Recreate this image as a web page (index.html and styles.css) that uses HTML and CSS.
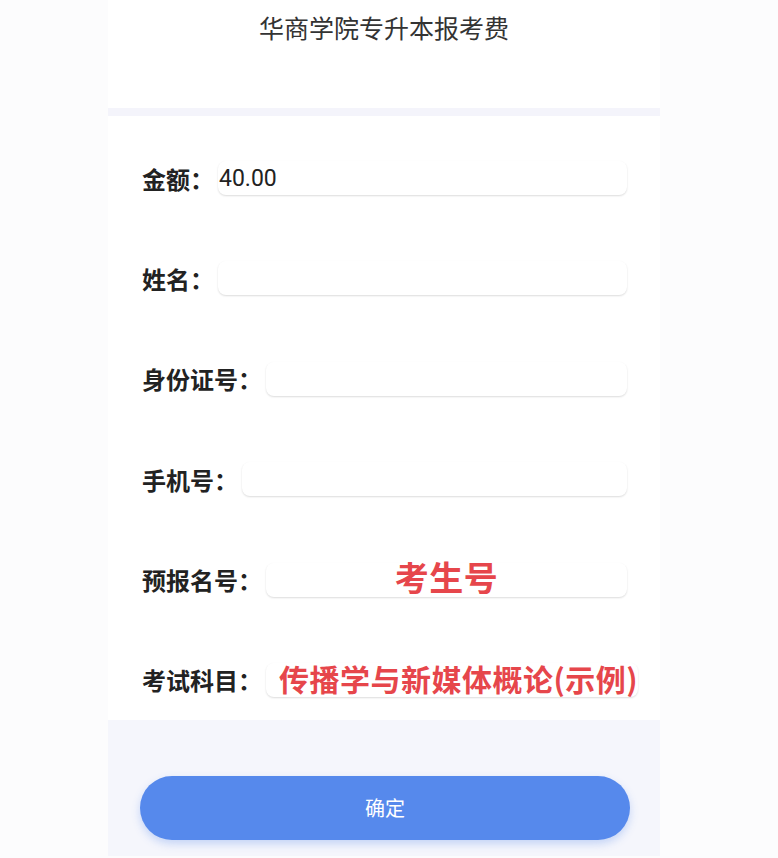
FILE: index.html
```html
<!DOCTYPE html>
<html lang="zh-CN">
<head>
    <meta charset="UTF-8">
    <meta name="viewport" content="width=device-width, initial-scale=1.0">
    <title>华商学院专升本报考费</title>
    <link rel="stylesheet" href="styles.css">
</head>
<body>
    <div class="page">
        <header class="top-bar">
            <h1>华商学院专升本报考费</h1>
        </header>

        <div class="divider"></div>

        <form class="pay-form">
            <div class="form-row">
                <label>金额：</label>
                <div class="field"><span class="value">40.00</span></div>
            </div>
            <div class="form-row">
                <label>姓名：</label>
                <div class="field"></div>
            </div>
            <div class="form-row">
                <label>身份证号：</label>
                <div class="field"></div>
            </div>
            <div class="form-row">
                <label>手机号：</label>
                <div class="field"></div>
            </div>
            <div class="form-row">
                <label>预报名号：</label>
                <div class="field field-center"><span class="note note-big">考生号</span></div>
            </div>
            <div class="form-row">
                <label>考试科目：</label>
                <div class="field"><span class="note">传播学与新媒体概论(示例)</span></div>
            </div>
        </form>

        <div class="actions">
            <button type="button" class="btn-submit">确定</button>
        </div>
    </div>
</body>
</html>
```

FILE: styles.css
```css
html, body {
    margin: 0;
    padding: 0;
}
body {
    background-color: #fcfcfd;
    font-family: Roboto, "Noto Sans CJK SC", sans-serif;
    color: #222;
}
.page {
    width: 552px;
    margin: 0 auto 0 108px;
    background-color: #fff;
    min-height: 856px;
    display: flex;
    flex-direction: column;
}
.top-bar {
    height: 108px;
}
.top-bar h1 {
    margin: 0;
    padding-top: 10px;
    text-align: center;
    font-size: 25px;
    font-weight: normal;
    color: #333;
    line-height: 34px;
    font-family: "Noto Sans CJK SC", sans-serif;
}
.divider {
    height: 8px;
    background-color: #f4f4fb;
}
.pay-form {
    padding: 45px 33px 23px 34px;
    display: flex;
    flex-direction: column;
    gap: 66.4px;
}
.form-row {
    display: flex;
    align-items: center;
    height: 34px;
}
.form-row label {
    font-family: "Noto Sans CJK SC", sans-serif;
    font-weight: bold;
    font-size: 24px;
    color: #222;
    margin-right: 4px;
    white-space: nowrap;
}
.field {
    flex: 1;
    height: 34px;
    border-radius: 8px;
    background-color: #fff;
    box-shadow: 0 1px 2px rgba(0, 0, 0, 0.14);
    display: flex;
    align-items: center;
    white-space: nowrap;
}
.field-center {
    justify-content: center;
}
.value {
    font-size: 23px;
    color: #222;
    padding-left: 1px;
}
.note {
    font-family: "Noto Sans CJK SC", sans-serif;
    font-weight: bold;
    font-size: 30px;
    letter-spacing: 0.5px;
    color: #e6464b;
    padding-left: 13px;
    margin-top: -4px;
}
.note-big {
    font-size: 34px;
    padding-left: 0;
    margin-top: -6px;
}
.actions {
    flex: 1;
    background-color: #f5f6fc;
    padding: 56px 30px 0 32px;
}
.btn-submit {
    display: block;
    width: 100%;
    height: 64px;
    border: none;
    border-radius: 32px;
    background-color: #5689ec;
    color: #fff;
    font-family: "Noto Sans CJK SC", sans-serif;
    font-size: 20px;
    box-shadow: 0 4px 8px rgba(86, 137, 236, 0.3);
}
```
